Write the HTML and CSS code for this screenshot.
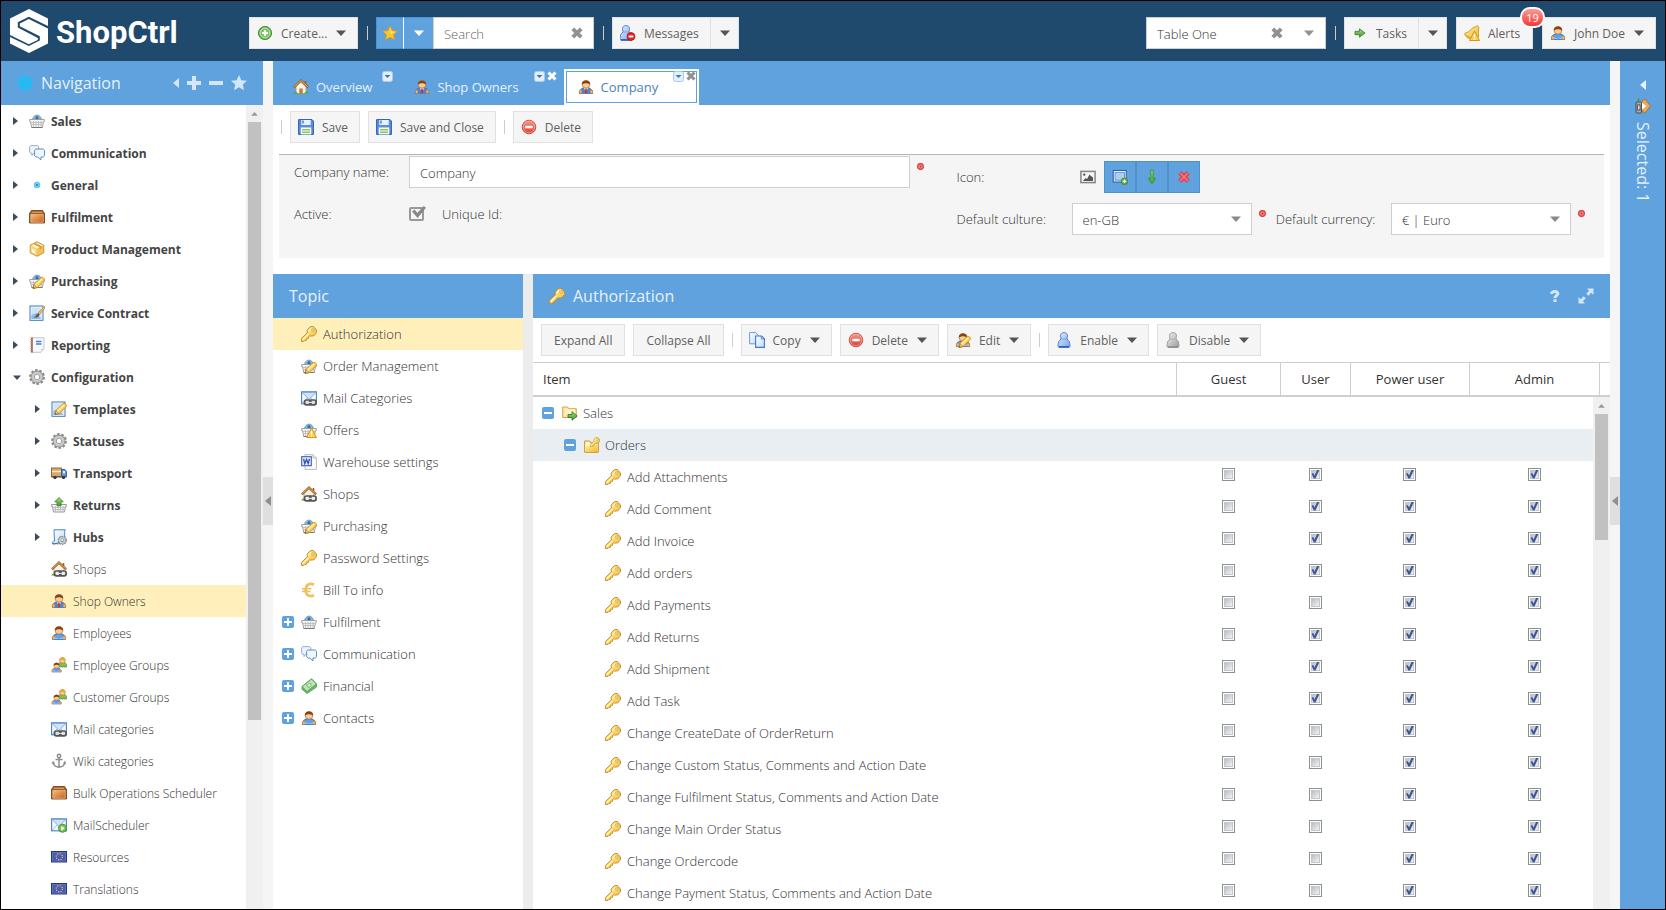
FILE: index.html
```html
<!DOCTYPE html>
<html lang="en">
<head>
<meta charset="utf-8">
<title>ShopCtrl</title>
<link rel="stylesheet" href="styles.css">
</head>
<body>
<svg class="sprite" aria-hidden="true">
  <defs>
    <linearGradient id="g-gold" x1="0" y1="0" x2="1" y2="1"><stop offset="0" stop-color="#fff3a8"/><stop offset="1" stop-color="#f2b62c"/></linearGradient>
    <linearGradient id="g-blue" x1="0" y1="0" x2="1" y2="1"><stop offset="0" stop-color="#e4efff"/><stop offset="1" stop-color="#7aa5ea"/></linearGradient>
    <linearGradient id="g-paper" x1="0" y1="0" x2="1" y2="1"><stop offset="0" stop-color="#fff"/><stop offset="1" stop-color="#bcdcf8"/></linearGradient>
    <linearGradient id="g-grey" x1="0" y1="0" x2="1" y2="1"><stop offset="0" stop-color="#f4f4f4"/><stop offset="1" stop-color="#999"/></linearGradient>
    <linearGradient id="g-box" x1="0" y1="0" x2="1" y2="1"><stop offset="0" stop-color="#f6bd7d"/><stop offset="1" stop-color="#cc6220"/></linearGradient>
    <linearGradient id="g-red" x1="0" y1="0" x2="0" y2="1"><stop offset="0" stop-color="#f79a8c"/><stop offset="1" stop-color="#d93a30"/></linearGradient>
    <linearGradient id="g-green" x1="0" y1="0" x2="0" y2="1"><stop offset="0" stop-color="#a7dd8b"/><stop offset="1" stop-color="#3f962f"/></linearGradient>
  </defs>
  <symbol id="i-pencil" viewBox="0 0 16 16"><path d="M4 15.500l.8-4 7.200-6.800c1.400-1.400 4.600 1.400 3 3l-7 7z" fill="#fcd45c" stroke="#c98a1e" stroke-width=".9"/><path d="M6.500 12l6.500-6" stroke="#fff0b0" stroke-width="1.200"/><path d="M4 15.500l.8-3.800 3 2.900z" fill="#f3d7b0" stroke="#a86c2c" stroke-width=".7"/><path d="M4 15.500l.5-1.800 1.300 1.300z" fill="#553"/></symbol>
  <symbol id="i-link" viewBox="0 0 16 16"><g fill="none" stroke="#555" stroke-width="1.700"><rect x="3.500" y="10" width="6.500" height="4.800" rx="2"/><rect x="8.600" y="10" width="6.500" height="4.800" rx="2"/></g><path d="M7 12.400h5" stroke="#e8e8e8" stroke-width="1.100"/></symbol>
  <symbol id="i-warn" viewBox="0 0 16 16"><path d="M10.500 6l5 9.500h-10z" fill="#fbcf4e" stroke="#d8941c" stroke-linejoin="round"/><path d="M10.500 9v3.500M10.500 13.500v1.200" stroke="#fff" stroke-width="1.400"/></symbol>
  <symbol id="i-basket" viewBox="0 0 16 16"><path d="M3.500 7c.5-6.500 8.500-6.500 9 0z" fill="#8bbbe0" stroke="#5f94c0" stroke-width=".9"/><path d="M6.500 6.500V4L8 3l1.500 1v2.500z" fill="#356f9f"/><path d="M.7 6.500h14.600v2h-.8l-1.200 6H2.700l-1.200-6H.7z" fill="#f4f4f4" stroke="#9a9a9a" stroke-width=".9"/><path d="M2 9.500h12M2.500 11.500h11M4.500 8v6M7 8v6M9.500 8v6M12 8v6" stroke="#b9b9b9" stroke-width=".8" fill="none"/><path d="M2.700 14.500h10.600" stroke="#777"/></symbol>
  <symbol id="i-basket-edit" viewBox="0 0 16 16"><use href="#i-basket"/><use href="#i-pencil"/></symbol>
  <symbol id="i-basket-warn" viewBox="0 0 16 16"><use href="#i-basket"/><use href="#i-warn"/></symbol>
  <symbol id="i-basket-up" viewBox="0 0 16 16"><path d="M.7 7.500h14.600v2h-.8l-1 5.500H2.500l-1-5.500H.7z" fill="#f4f4f4" stroke="#8f8f8f" stroke-width=".9"/><path d="M2 10.500h12M2.500 12.500h11M4.500 9v5.500M7 9v5.500M9.500 9v5.500M12 9v5.500" stroke="#b6b6b6" stroke-width=".8"/><path d="M8 .6l4.200 4.200h-2.200v4h-4v-4H3.800z" fill="url(#g-green)" stroke="#3b8b2b" stroke-width=".9"/></symbol>
  <symbol id="i-chat" viewBox="0 0 16 16"><path d="M2 .6h6.500l1.300 1.200v5.400l-1.300 1.200h-4L3 10.500V8.400H2L.6 7.200V1.800z" fill="#eef4fb" stroke="#8aa6cb" stroke-width=".9"/><path d="M6.800 4h7.400l1.300 1.200v5.600L14.200 12H12l-.2 3-3-3h-2l-1.200-1.200V5.200z" fill="#eef6fe" stroke="#4f82bd" stroke-width=".9"/></symbol>
  <symbol id="i-dot" viewBox="0 0 16 16"><circle cx="8" cy="8" r="2.600" fill="#8bdcf7" stroke="#6cc0ee" stroke-width="1.300"/><circle cx="8" cy="8" r="1.300" fill="#2196d8"/></symbol>
  <symbol id="i-box" viewBox="0 0 16 16"><path d="M2.500 1.500h11l2 3v9.500h-15V4.500z" fill="#8a4a12" stroke="#6b360b" stroke-width=".8"/><path d="M3 2.500h10l1 1.600H2z" fill="#d79a5c"/><rect x="1.800" y="5.200" width="12.400" height="8" fill="url(#g-box)" stroke="#f3c493" stroke-width=".7"/></symbol>
  <symbol id="i-cube" viewBox="0 0 16 16"><path d="M8 .7l6.800 3.500v7.600L8 15.300l-6.800-3.500V4.200z" fill="#f3c258" stroke="#c58f2b" stroke-width=".9"/><path d="M8 1.500l6 3-6 3.200-6-3.200z" fill="#fff2c8"/><path d="M1.800 5l5.800 3.200v6L1.800 11.400z" fill="#fbdc8a"/><path d="M4.500 2.900l6 3.200v2.500l2-1V5.200L6.500 2z" fill="#d39a38"/><path d="M3 8.500l3 1.600v2.500l-3-1.500z" fill="#fff"/></symbol>
  <symbol id="i-note" viewBox="0 0 16 16"><rect x="1" y="1" width="13" height="14.300" fill="#fff" stroke="#3b76bd"/><rect x="2.300" y="2.300" width="10.400" height="11.700" fill="#cfe4f8"/><path d="M2.300 14v-4l5-2 5 6z" fill="#8ebbe8"/></symbol>
  <symbol id="i-note-brush" viewBox="0 0 16 16"><use href="#i-note"/><path d="M15.500 1.500L9 8l1.500 1.500L16 3z" fill="#f0c46a" stroke="#b07a24" stroke-width=".7"/><path d="M9 8l1.600 1.500C10 12 8 12.800 4.800 12.600 7 11.500 7 9.500 9 8z" fill="#5a5a58"/></symbol>
  <symbol id="i-note-edit" viewBox="0 0 16 16"><use href="#i-note"/><use href="#i-pencil" y="-2"/></symbol>
  <symbol id="i-report" viewBox="0 0 16 16"><path d="M3 .8h12v11l-3 3.500H3z" fill="#f6f8fb" stroke="#b8bec8" stroke-width=".9"/><path d="M15 11.800h-3v3.500z" fill="#d3dae2"/><path d="M2.800.5v15" stroke="#9a4d32" stroke-width="1.800"/><path d="M1 2.200h2.500M1 4.500h2.500M1 6.800h2.500M1 9.100h2.500M1 11.400h2.500M1 13.700h2.500" stroke="#d9b9a8" stroke-width=".8"/><path d="M7 4.500h5.500M7 7h5.500" stroke="#4a7ed0" stroke-width="1.500"/></symbol>
  <symbol id="i-gear" viewBox="0 0 16 16"><circle cx="8" cy="8" r="6.600" fill="none" stroke="#8a8a8a" stroke-width="2.600" stroke-dasharray="2.500 1.647"/><circle cx="8" cy="8" r="4.300" fill="none" stroke="#8d8d8d" stroke-width="4.200"/><circle cx="8" cy="8" r="4.200" fill="none" stroke="#c9c9c9" stroke-width="2.800"/></symbol>
  <symbol id="i-truck" viewBox="0 0 16 16"><rect x=".5" y="3" width="10" height="8.500" fill="#d8a868" stroke="#8a5f2e" stroke-width=".9"/><path d="M1 6.500h9" stroke="#fff0d0" stroke-width="1.400"/><path d="M10.500 4.500h3.500l1.500 2v5h-5z" fill="#5b93dc" stroke="#2f5ea4" stroke-width=".9"/><path d="M12 6h2v2.500h-2z" fill="#e0efff"/><path d="M.5 12h15" stroke="#444" stroke-width="1"/><circle cx="4" cy="12.500" r="1.600" fill="#333"/><circle cx="12.500" cy="12.500" r="1.600" fill="#333"/></symbol>
  <symbol id="i-script-gear" viewBox="0 0 16 16"><path d="M3 .8h11.500c-1 .6-1 2-.8 3v8l-11 3.500c-2-.2-2-3 .8-3.200z" fill="url(#g-paper)" stroke="#3f78be" stroke-width=".9"/><path d="M1.500 14.500c2-.5 5 1 8 0" stroke="#3f78be" fill="none"/><g transform="translate(6.500 6.500) scale(.6)"><use href="#i-gear" width="16" height="16"/></g></symbol>
  <symbol id="i-house" viewBox="0 0 16 16"><path d="M3 7l5-4.500L13 7v7.500H3z" fill="#fbf3e2" stroke="#a89878" stroke-width=".8"/><path d="M12.500 2v4" stroke="#9c5a2a" stroke-width="1.600"/><path d="M.8 8.300L8 1.600l7.200 6.700" fill="none" stroke="#9c6228" stroke-width="2.300"/><path d="M1.200 7.800L8 1.600l6.800 6.200" fill="none" stroke="#e6b56c" stroke-width=".9"/><path d="M6.300 9.500h3.400v5.500H6.300z" fill="#b98046"/><path d="M.5 14.500c0-2.500 3.500-2.500 4.500 0zM11 14.500c1-2.500 4.500-2.500 4.500 0z" fill="#57a83f"/></symbol>
  <symbol id="i-house-link" viewBox="0 0 16 16"><use href="#i-house"/><path d="M4 10h11v5H4z" fill="#eee"/><use href="#i-link"/></symbol>
  <symbol id="i-user" viewBox="0 0 16 16"><path d="M1.500 14.500C1.500 10 4 8.800 8 8.800s6.500 1.200 6.500 5.700z" fill="#5da2ee" stroke="#2463b4" stroke-width=".9"/><ellipse cx="2.800" cy="12.800" rx="1.600" ry="1.900" fill="#f3b26c" stroke="#c07836" stroke-width=".6"/><ellipse cx="13.200" cy="12.800" rx="1.600" ry="1.900" fill="#f3b26c" stroke="#c07836" stroke-width=".6"/><path d="M4.500 12c2 2 5 2 7 0l.5 2.300H4z" fill="#8cc6fb"/><circle cx="8" cy="5.300" r="3.900" fill="#f9cb92" stroke="#b3703a" stroke-width=".7"/><path d="M3.800 5.500C3.400.2 12.600.2 12.200 5.500 10.500 4.600 9 4.200 8 4.200s-2.500.4-4.200 1.300z" fill="#85421b"/></symbol>
  <symbol id="i-suit" viewBox="0 0 16 16"><use href="#i-user"/><path d="M4 10l4-1 4 1 .5 4.800h-9z" fill="#5783b8"/><path d="M6 9.200h4L8 13z" fill="#f4f8ff"/><path d="M7.300 9.500h1.400l.4 4L8 14.600l-1.100-1.100z" fill="#cf2f36"/></symbol>
  <symbol id="i-users" viewBox="0 0 16 16"><g transform="translate(6.300 0) scale(.64)"><path d="M0 15.500C0 9 4 8.800 8 8.800s7.500.2 7 6.700z" fill="#7dc44d" stroke="#3f8426"/><circle cx="8" cy="5.300" r="4.400" fill="#f9cb92" stroke="#b3703a"/><path d="M3 6C2.500-.8 13.500-.8 13 6 11 4 5 4 3 6z" fill="#eda822"/></g><g transform="translate(0 4.800) scale(.7)"><use href="#i-user" width="16" height="16"/></g></symbol>
  <symbol id="i-user-edit" viewBox="0 0 16 16"><use href="#i-user"/><use href="#i-pencil"/></symbol>
  <symbol id="i-mail" viewBox="0 0 16 16"><rect x=".6" y="1.800" width="14.800" height="12" fill="#f4f9ff" stroke="#4a7fc1" stroke-width="1.100"/><path d="M1.500 13l5-5.500M14.500 13l-5-5.500" stroke="#9fc0e8" fill="none"/><path d="M1.200 2.500L8 9.500l6.800-7z" fill="#cfe2f8" stroke="#7ba7dc" stroke-width=".9"/></symbol>
  <symbol id="i-mail-link" viewBox="0 0 16 16"><use href="#i-mail"/><path d="M4 10.500h11v4H4z" fill="#ddd"/><use href="#i-link"/></symbol>
  <symbol id="i-mail-go" viewBox="0 0 16 16"><use href="#i-mail"/><circle cx="11.500" cy="11.300" r="4" fill="#79c257" stroke="#3e8f2e" stroke-width=".9"/><path d="M10.300 8.900l3.200 2.400-3.200 2.400z" fill="#fff"/></symbol>
  <symbol id="i-anchor" viewBox="0 0 16 16"><g fill="none" stroke="#8d8d8d" stroke-width="1.500"><circle cx="8" cy="3" r="1.700"/><path d="M8 4.700v9.300M4.500 6.500h7M2 9c.3 3.500 2.700 5 6 5.200 3.300-.2 5.700-1.700 6-5.200"/></g><path d="M.8 10.800L2 7.800l2.200 2.600zM15.200 10.800L14 7.800l-2.200 2.600z" fill="#8d8d8d"/></symbol>
  <symbol id="i-flag" viewBox="0 0 16 16"><rect x=".5" y="2.500" width="15" height="10.500" fill="#4a5bb0" stroke="#29366f"/><rect x="1.500" y="3.500" width="13" height="8.500" fill="none" stroke="#7180cc" stroke-width=".6"/><circle cx="8.300" cy="7.800" r="3.100" fill="none" stroke="#f4df6a" stroke-width="1.100" stroke-dasharray="1.100 1.330"/></symbol>
  <symbol id="i-key" viewBox="0 0 16 16"><path d="M9.300.7l2.700-.3 3.300 3.200.3 2.900-2.800 3.300-3.400.3-.9-.2-.9.900-.3 1.700-1.700.3-.4 1.600-1.600.3-.9.900H.6v-3.200l5.700-5.500-.1-2.700z" fill="url(#g-gold)" stroke="#c98c22" stroke-width="1" stroke-linejoin="round"/><circle cx="12" cy="4" r="1.200" fill="#fff" stroke="#c98c22" stroke-width=".7"/><path d="M1.600 13.600l5.900-5.700M7.500 6l2.200-3.500" stroke="#fffbd8" stroke-width="1.100" fill="none"/></symbol>
  <symbol id="i-word" viewBox="0 0 16 16"><path d="M4 .6h8l3.400 3.400v11.400H4z" fill="#fbfbfb" stroke="#b4b4b4" stroke-width=".9"/><path d="M12 .6v3.400h3.400" fill="#ddd" stroke="#b4b4b4" stroke-width=".7"/><rect x=".7" y="2.700" width="9.600" height="9" fill="#e5ecfb" stroke="#3d5cb8" stroke-width="1.100"/><path d="M2.600 4.800l1.200 4.800 1.700-4 1.700 4 1.200-4.800" fill="none" stroke="#3355bb" stroke-width="1.400"/></symbol>
  <symbol id="i-euro" viewBox="0 0 16 16"><path d="M13 2.800C9 .6 4.800 2.400 4.600 8c.2 5.600 4.400 7.400 8.400 5.200" fill="none" stroke="#e8c564" stroke-width="2.800"/><path d="M1 6.700h9.500M1 9.400h8.500" stroke="#e8c564" stroke-width="1.600"/></symbol>
  <symbol id="i-money" viewBox="0 0 16 16"><path d="M1 8.500L10.500.8 15.500 6l.1 3L6 15.500l-5-4.300z" fill="#6fb56d" stroke="#4f9e52" stroke-width=".8"/><path d="M1.200 8.500L10.500 1l4.800 5-9.300 7.500z" fill="#bde5b6" stroke="#55a55b" stroke-width=".9"/><ellipse cx="8.200" cy="7.300" rx="2.300" ry="1.600" fill="#e0f4da" stroke="#6ab36c" stroke-width=".8" transform="rotate(-40 8.200 7.300)"/><path d="M4.500 6l5 5.200" stroke="#7fbf7c" stroke-width=".7"/></symbol>
  <symbol id="i-folder" viewBox="0 0 16 16"><path d="M.7 2h5l1 1.700h7.600V12.500H.7z" fill="#fbe7a6" stroke="#d69d35" stroke-width=".9"/><path d="M3 5h10M3 7h10M3 9h7" stroke="#fffbe8" stroke-width="1"/></symbol>
  <symbol id="i-folder-go" viewBox="0 0 16 16"><use href="#i-folder"/><path d="M6 9.500h4V6.700l5.200 4.300-5.200 4.300v-2.800H6z" fill="url(#g-green)" stroke="#35792a" stroke-width=".9"/></symbol>
  <symbol id="i-folder-key" viewBox="0 0 16 16"><path d="M.7 4h5l1 1.700h7.600V15.300H.7z" fill="#fff6d0" stroke="#d08c20" stroke-width="1"/><path d="M1.300 15V9h5l1-1.300h6.500V15z" fill="url(#g-gold)"/><g transform="translate(5.800 0) scale(.64)"><use href="#i-key" width="16" height="16"/></g></symbol>
  <symbol id="i-copy" viewBox="0 0 16 16"><path d="M.6.600h6l2.700 2.700v8.500H.6z" fill="url(#g-paper)" stroke="#6f9bd8"/><path d="M6.600 4h6l2.800 2.700v8.700H6.600z" fill="url(#g-paper)" stroke="#4577c4" stroke-width="1.100"/><path d="M12.300 4v3h3" fill="none" stroke="#4577c4" stroke-width=".8"/></symbol>
  <symbol id="i-delete" viewBox="0 0 16 16"><circle cx="8" cy="8" r="6.800" fill="url(#g-red)" stroke="#c94a40" stroke-width=".9"/><circle cx="8" cy="8" r="5.700" fill="none" stroke="#f7b3a8" stroke-width=".7"/><rect x="4.300" y="6.800" width="7.400" height="2.500" fill="#fff"/></symbol>
  <symbol id="i-add" viewBox="0 0 16 16"><circle cx="8" cy="8" r="6.600" fill="#57a943" stroke="#3f8d35" stroke-width=".9"/><circle cx="8" cy="8" r="5" fill="#7cc45f" stroke="#cfeac4" stroke-width="1"/><path d="M8 5v6M5 8h6" stroke="#fff" stroke-width="2.200"/></symbol>
  <symbol id="i-star" viewBox="0 0 16 16"><path d="M8 .8l2.200 4.800 5.200.6-3.800 3.500 1 5.200L8 12.300l-4.600 2.600 1-5.200L.6 6.200l5.200-.6z" fill="#fbc72e" stroke="#d9951b" stroke-width=".8" stroke-linejoin="round"/><path d="M8 2.500L9.500 6.500l4 .6-4.500 2z" fill="#ffe685"/></symbol>
  <symbol id="i-pawn" viewBox="0 0 16 16"><path d="M5 7L4.500 3.300C4.500-.3 11.500-.3 11.500 3.300L11 7l2.300 2.500.8 4.500-1 1.500H2.900L1.900 14l.8-4.500z" fill="url(#g-blue)" stroke="#4d7bc9" stroke-width=".9"/><path d="M2.600 14h10.800l-.7 1.400H3.300z" fill="#3263c4"/><path d="M5 7h6" stroke="#6b95dc" stroke-width=".8"/></symbol>
  <symbol id="i-pawn-grey" viewBox="0 0 16 16"><path d="M5 7L4.500 3.300C4.500-.3 11.500-.3 11.500 3.300L11 7l2.300 2.500.8 4.500-1 1.500H2.900L1.900 14l.8-4.500z" fill="url(#g-grey)" stroke="#999" stroke-width=".9"/><path d="M2.600 14.300h10.800l-.7 1.100H3.300z" fill="#888"/><path d="M5 7h6" stroke="#aaa" stroke-width=".8"/></symbol>
  <symbol id="i-pawn-del" viewBox="0 0 16 16"><use href="#i-pawn" x="-2"/><circle cx="11" cy="11.500" r="3.900" fill="#e22b24" stroke="#b90f0f" stroke-width=".9"/><rect x="8.600" y="10.600" width="4.800" height="1.800" fill="#fff"/></symbol>
  <symbol id="i-go" viewBox="0 0 16 16"><path d="M3 6.300h4.500V3.800L13 8l-5.500 4.200V9.700H3z" fill="url(#g-green)" stroke="#3a8a2c" stroke-width=".9"/></symbol>
  <symbol id="i-bell" viewBox="0 0 16 16"><path d="M13.500.6l1.300 1.600c-.8 4.500 0 7-.2 9.300L12 14.800 1 10.200.8 8.300C6 7.800 7 2.300 11.800 1.700z" fill="url(#g-gold)" stroke="#cf9320" stroke-width=".9"/><path d="M2 10.500c1 3 3 3.500 5 2.300" fill="#eab83e" stroke="#c58a1c" stroke-width=".8"/><use href="#i-warn"/></symbol>
  <symbol id="i-save" viewBox="0 0 16 16"><path d="M.6.600h13.400l1.400 1.400v13.400H.6z" fill="#5a8fdc" stroke="#2f5cae" stroke-width="1"/><rect x="3.300" y="1" width="9.400" height="5" fill="#e9f1fd"/><path d="M5 1.500v3" stroke="#4377cf" stroke-width="1.400"/><rect x="2.800" y="8.500" width="10.400" height="6.900" fill="#fff"/><path d="M4 10.700h8M4 13.200h8" stroke="#86c85e" stroke-width="1.400"/></symbol>
  <symbol id="i-picture" viewBox="0 0 16 16"><rect x=".9" y="2.400" width="14.200" height="11.200" fill="#f4f4f4" stroke="#868686" stroke-width="1.500"/><path d="M3 12l2.500-3 1.500 1 2.500-4.500 1.500 1.500 2 1.500V12z" fill="#555"/><circle cx="4.200" cy="5.600" r="1.200" fill="#555"/></symbol>
  <symbol id="i-image-add" viewBox="0 0 16 16"><rect x="1.200" y="1.500" width="13" height="11.500" fill="#fff" stroke="#315fa8" stroke-width="1.100"/><rect x="3" y="3.300" width="9.400" height="7.900" fill="#a9d0ef" stroke="#4f88c4" stroke-width=".8"/><circle cx="12.500" cy="12.300" r="3.300" fill="#5eb044" stroke="#35812a" stroke-width=".7"/><path d="M12.500 10.500v3.600M10.700 12.300h3.600" stroke="#fff" stroke-width="1.300"/></symbol>
  <symbol id="i-down" viewBox="0 0 16 16"><path d="M6.800 1.200h2.400v8.500l2.600-.2L8 14.800 4.200 9.500l2.600.2z" fill="url(#g-green)" stroke="#3b9430" stroke-width=".9"/></symbol>
  <symbol id="i-cross" viewBox="0 0 16 16"><path d="M3.800 3.800l8.400 8.400M12.200 3.800l-8.400 8.400" stroke="#e2343c" stroke-width="4.200"/><path d="M4 4l8 8M12 4l-8 8" stroke="#f4717a" stroke-width="1.800"/></symbol>
  <symbol id="i-caret" viewBox="0 0 10 6"><path d="M0 .5h10L5 6z" fill="currentColor"/></symbol>
  <symbol id="i-caret-left" viewBox="0 0 6 10"><path d="M6 0v10L0 5z" fill="currentColor"/></symbol>
  <symbol id="i-caret-right" viewBox="0 0 5 8"><path d="M0 0v8l5-4z" fill="currentColor"/></symbol>
  <symbol id="i-x" viewBox="0 0 12 12"><path d="M1.800 1.800l8.400 8.400M10.200 1.800l-8.400 8.400" stroke="currentColor" stroke-width="3.800"/></symbol>
  <symbol id="i-plus" viewBox="0 0 14 14"><path d="M7 0v14M0 7h14" stroke="currentColor" stroke-width="4"/></symbol>
  <symbol id="i-minus" viewBox="0 0 14 14"><path d="M0 7h14" stroke="currentColor" stroke-width="4"/></symbol>
  <symbol id="i-solid-star" viewBox="0 0 16 16"><path d="M8 0l2.300 5.200 5.700.6-4.200 3.800 1.200 5.700L8 12.300l-5 3 1.200-5.700L0 5.800l5.700-.6z" fill="currentColor"/></symbol>
  <symbol id="i-expand" viewBox="0 0 16 16"><path d="M9 .5h6.500V7l-2.200-2.200-3 3-2.100-2.100 3-3zM7 15.500H.5V9l2.200 2.200 3-3 2.100 2.100-3 3z" fill="currentColor"/></symbol>
  <symbol id="i-help" viewBox="0 0 10 14"><path d="M1.600 5C1.400 1.700 8 1.700 7.800 4.600 7.700 6.600 5 6.600 5 9" fill="none" stroke="currentColor" stroke-width="3"/><path d="M3.400 10.300h3.200V13H3.400z" fill="currentColor"/></symbol>
  <symbol id="i-mini" viewBox="0 0 11 11"><rect x=".5" y=".5" width="10" height="10" rx="2" fill="#e3effc" stroke="#a9cbef"/><path d="M2.500 4h6l-3 3z" fill="#3f78b5"/></symbol>
  <symbol id="i-close-box" viewBox="0 0 12 12"><rect width="12" height="12" rx="2" fill="#5fa2dd"/><path d="M2 6h8" stroke="#fff" stroke-width="2"/></symbol>
  <symbol id="i-open-box" viewBox="0 0 12 12"><rect width="12" height="12" rx="2" fill="#5fa2dd"/><path d="M2 6h8M6 2v8" stroke="#fff" stroke-width="2"/></symbol>
  <symbol id="i-required" viewBox="0 0 7 7"><circle cx="3.500" cy="3.500" r="2.900" fill="#f48a8a" stroke="#da3838" stroke-width="1.100"/><circle cx="3.500" cy="3.500" r="1" fill="#d33"/></symbol>
  <symbol id="i-scan" viewBox="0 0 16 16"><path d="M7 3l3-2 5.500 7-5.500 7-3-2z" fill="#e7a75c" stroke="#a96b2a" stroke-width=".8"/><path d="M6 4l5.500 4L6 12.500z" fill="#fff"/><rect x="1" y="4" width="5.500" height="11" rx="1" fill="#a9a9a9" stroke="#444" stroke-width=".9"/><rect x="2.700" y="7" width="2.300" height="5" fill="#f2f2f2" stroke="#333" stroke-width=".8"/><path d="M3.500 4V.500" stroke="#3a9a38" stroke-width="1.500"/></symbol>
  <symbol id="i-logo" viewBox="0 0 38 44"><path d="M19 0l19 9.500V17L18.800 7.700 7.800 13.200v5.400L27.800 29v2L18.800 35.200 0 26V9.500z" fill="currentColor"/><path d="M19 44L0 34.500V28l18.800 9 11-5.500v-4.300L9.800 17.200v-2.600L18.800 10 38 19.500v15z" fill="currentColor"/></symbol>
</svg>

<div class="app">
  <header class="topbar">
    <a class="logo" href="#"><svg><use href="#i-logo"/></svg><span>ShopCtrl</span></a>
    <button class="btn create"><svg class="ico"><use href="#i-add"/></svg><span>Create...</span><svg class="caret"><use href="#i-caret"/></svg></button>
    <i class="sep"></i>
    <div class="group search">
      <button class="fav" aria-label="Favourites"><svg class="ico"><use href="#i-star"/></svg></button>
      <button class="fav drop" aria-label="Favourites menu"><svg class="caret"><use href="#i-caret"/></svg></button>
      <div class="field"><input type="text" placeholder="Search" aria-label="Search"><button class="clear" aria-label="Clear search"><svg><use href="#i-x"/></svg></button></div>
    </div>
    <i class="sep"></i>
    <div class="group">
      <button class="btn msg"><svg class="ico"><use href="#i-pawn-del"/></svg><span>Messages</span></button>
      <button class="btn split" aria-label="Messages menu"><svg class="caret"><use href="#i-caret"/></svg></button>
    </div>
    <div class="right">
      <div class="field combo"><input type="text" value="Table One" aria-label="Table"><button class="clear" aria-label="Clear table"><svg><use href="#i-x"/></svg></button><button class="clear" aria-label="Choose table"><svg class="caret"><use href="#i-caret"/></svg></button></div>
      <i class="sep"></i>
      <div class="group">
        <button class="btn tasks"><svg class="ico"><use href="#i-go"/></svg><span>Tasks</span></button>
        <button class="btn split" aria-label="Tasks menu"><svg class="caret"><use href="#i-caret"/></svg></button>
      </div>
      <button class="btn alerts"><svg class="ico"><use href="#i-bell"/></svg><span>Alerts</span><b class="badge">19</b></button>
      <button class="btn account"><svg class="ico"><use href="#i-user"/></svg><span>John Doe</span><svg class="caret"><use href="#i-caret"/></svg></button>
    </div>
  </header>

  <div class="body">
    <aside class="nav">
      <div class="bar navbar">
        <svg class="brand"><use href="#i-logo"/></svg><h2>Navigation</h2>
        <div class="tools">
          <button aria-label="Collapse panel"><svg class="arrow-left"><use href="#i-caret-left"/></svg></button>
          <button aria-label="Expand all"><svg class="t14"><use href="#i-plus"/></svg></button>
          <button aria-label="Collapse all"><svg class="t14"><use href="#i-minus"/></svg></button>
          <button aria-label="Favourites"><svg class="t16"><use href="#i-solid-star"/></svg></button>
        </div>
      </div>
      <div class="navscroll">
        <ul class="tree">
          <li class="l1"><svg class="tri"><use href="#i-caret-right"/></svg><svg class="ico"><use href="#i-basket"/></svg><span>Sales</span></li>
          <li class="l1"><svg class="tri"><use href="#i-caret-right"/></svg><svg class="ico"><use href="#i-chat"/></svg><span>Communication</span></li>
          <li class="l1"><svg class="tri"><use href="#i-caret-right"/></svg><svg class="ico"><use href="#i-dot"/></svg><span>General</span></li>
          <li class="l1"><svg class="tri"><use href="#i-caret-right"/></svg><svg class="ico"><use href="#i-box"/></svg><span>Fulfilment</span></li>
          <li class="l1"><svg class="tri"><use href="#i-caret-right"/></svg><svg class="ico"><use href="#i-cube"/></svg><span>Product Management</span></li>
          <li class="l1"><svg class="tri"><use href="#i-caret-right"/></svg><svg class="ico"><use href="#i-basket-edit"/></svg><span>Purchasing</span></li>
          <li class="l1"><svg class="tri"><use href="#i-caret-right"/></svg><svg class="ico"><use href="#i-note-brush"/></svg><span>Service Contract</span></li>
          <li class="l1"><svg class="tri"><use href="#i-caret-right"/></svg><svg class="ico"><use href="#i-report"/></svg><span>Reporting</span></li>
          <li class="l1"><svg class="tri open"><use href="#i-caret"/></svg><svg class="ico"><use href="#i-gear"/></svg><span>Configuration</span></li>
          <li class="l2"><svg class="tri"><use href="#i-caret-right"/></svg><svg class="ico"><use href="#i-note-edit"/></svg><span>Templates</span></li>
          <li class="l2"><svg class="tri"><use href="#i-caret-right"/></svg><svg class="ico"><use href="#i-gear"/></svg><span>Statuses</span></li>
          <li class="l2"><svg class="tri"><use href="#i-caret-right"/></svg><svg class="ico"><use href="#i-truck"/></svg><span>Transport</span></li>
          <li class="l2"><svg class="tri"><use href="#i-caret-right"/></svg><svg class="ico"><use href="#i-basket-up"/></svg><span>Returns</span></li>
          <li class="l2"><svg class="tri"><use href="#i-caret-right"/></svg><svg class="ico"><use href="#i-script-gear"/></svg><span>Hubs</span></li>
          <li class="leaf"><svg class="ico"><use href="#i-house-link"/></svg><a href="#">Shops</a></li>
          <li class="leaf selected"><svg class="ico"><use href="#i-suit"/></svg><a href="#">Shop Owners</a></li>
          <li class="leaf"><svg class="ico"><use href="#i-user"/></svg><a href="#">Employees</a></li>
          <li class="leaf"><svg class="ico"><use href="#i-users"/></svg><a href="#">Employee Groups</a></li>
          <li class="leaf"><svg class="ico"><use href="#i-users"/></svg><a href="#">Customer Groups</a></li>
          <li class="leaf"><svg class="ico"><use href="#i-mail-link"/></svg><a href="#">Mail categories</a></li>
          <li class="leaf"><svg class="ico"><use href="#i-anchor"/></svg><a href="#">Wiki categories</a></li>
          <li class="leaf"><svg class="ico"><use href="#i-box"/></svg><a href="#">Bulk Operations Scheduler</a></li>
          <li class="leaf"><svg class="ico"><use href="#i-mail-go"/></svg><a href="#">MailScheduler</a></li>
          <li class="leaf"><svg class="ico"><use href="#i-flag"/></svg><a href="#">Resources</a></li>
          <li class="leaf"><svg class="ico"><use href="#i-flag"/></svg><a href="#">Translations</a></li>
        </ul>
        <div class="scroll"><svg><use href="#i-caret"/></svg><i class="thumb long"></i></div>
      </div>
    </aside>
    <div class="splitter"><button aria-label="Toggle navigation"><svg><use href="#i-caret-left"/></svg></button></div>

    <main class="main">
      <div class="bar tabs">
        <div class="tab single"><svg class="ico"><use href="#i-house"/></svg><a href="#">Overview</a><span class="marks"><svg class="mini"><use href="#i-mini"/></svg></span></div>
        <div class="tab"><svg class="ico"><use href="#i-suit"/></svg><a href="#">Shop Owners</a><span class="marks"><svg class="mini"><use href="#i-mini"/></svg><svg class="shut"><use href="#i-x"/></svg></span></div>
        <div class="tab active"><svg class="ico"><use href="#i-suit"/></svg><a href="#">Company</a><span class="marks"><svg class="mini"><use href="#i-mini"/></svg><svg class="shut"><use href="#i-x"/></svg></span></div>
      </div>
      <div class="toolbar actions">
        <i class="sep"></i>
        <button class="btn"><svg class="ico"><use href="#i-save"/></svg><span>Save</span></button>
        <button class="btn"><svg class="ico"><use href="#i-save"/></svg><span>Save and Close</span></button>
        <i class="sep"></i>
        <button class="btn"><svg class="ico"><use href="#i-delete"/></svg><span>Delete</span></button>
      </div>
      <form class="form">
        <div class="col">
          <div class="line"><label for="name">Company name:</label><input class="text" id="name" type="text" value="Company"><svg class="req"><use href="#i-required"/></svg></div>
          <div class="line"><label for="active">Active:</label><input class="tick" id="active" type="checkbox" checked><span class="uid">Unique Id:</span></div>
        </div>
        <div class="col second">
          <div class="line"><span class="lbl">Icon:</span><svg class="ico pic"><use href="#i-picture"/></svg>
            <div class="iconbtns"><button type="button" aria-label="Add image"><svg class="ico"><use href="#i-image-add"/></svg></button><button type="button" aria-label="Download image"><svg class="ico"><use href="#i-down"/></svg></button><button type="button" aria-label="Remove image"><svg class="ico"><use href="#i-cross"/></svg></button></div></div>
          <div class="line"><label for="culture">Default culture:</label><div class="pick"><select id="culture"><option>en-GB</option></select><svg class="caret"><use href="#i-caret"/></svg></div><svg class="req"><use href="#i-required"/></svg>
            <label for="currency">Default currency:</label><div class="pick"><select id="currency"><option>€ | Euro</option></select><svg class="caret"><use href="#i-caret"/></svg></div><svg class="req"><use href="#i-required"/></svg></div>
        </div>
      </form>

      <div class="lower">
        <section class="topic">
          <div class="bar"><h2>Topic</h2></div>
          <ul class="topics">
            <li class="selected"><i class="box"></i><svg class="ico"><use href="#i-key"/></svg><a href="#">Authorization</a></li>
            <li><i class="box"></i><svg class="ico"><use href="#i-basket-edit"/></svg><a href="#">Order Management</a></li>
            <li><i class="box"></i><svg class="ico"><use href="#i-mail-link"/></svg><a href="#">Mail Categories</a></li>
            <li><i class="box"></i><svg class="ico"><use href="#i-basket-warn"/></svg><a href="#">Offers</a></li>
            <li><i class="box"></i><svg class="ico"><use href="#i-word"/></svg><a href="#">Warehouse settings</a></li>
            <li><i class="box"></i><svg class="ico"><use href="#i-house-link"/></svg><a href="#">Shops</a></li>
            <li><i class="box"></i><svg class="ico"><use href="#i-basket-edit"/></svg><a href="#">Purchasing</a></li>
            <li><i class="box"></i><svg class="ico"><use href="#i-key"/></svg><a href="#">Password Settings</a></li>
            <li><i class="box"></i><svg class="ico"><use href="#i-euro"/></svg><a href="#">Bill To info</a></li>
            <li><svg class="box"><use href="#i-open-box"/></svg><svg class="ico"><use href="#i-basket"/></svg><a href="#">Fulfilment</a></li>
            <li><svg class="box"><use href="#i-open-box"/></svg><svg class="ico"><use href="#i-chat"/></svg><a href="#">Communication</a></li>
            <li><svg class="box"><use href="#i-open-box"/></svg><svg class="ico"><use href="#i-money"/></svg><a href="#">Financial</a></li>
            <li><svg class="box"><use href="#i-open-box"/></svg><svg class="ico"><use href="#i-user"/></svg><a href="#">Contacts</a></li>
          </ul>
        </section>
        <div class="divider"></div>
        <section class="auth">
          <div class="bar"><svg class="ico"><use href="#i-key"/></svg><h2>Authorization</h2>
            <div class="tools wide"><button aria-label="Help"><svg class="help"><use href="#i-help"/></svg></button><button aria-label="Maximise"><svg class="t16"><use href="#i-expand"/></svg></button></div></div>
          <div class="toolbar">
            <button class="btn plain">Expand All</button>
            <button class="btn plain">Collapse All</button>
            <i class="sep"></i>
            <button class="btn"><svg class="ico"><use href="#i-copy"/></svg><span>Copy</span><svg class="caret"><use href="#i-caret"/></svg></button>
            <button class="btn"><svg class="ico"><use href="#i-delete"/></svg><span>Delete</span><svg class="caret"><use href="#i-caret"/></svg></button>
            <button class="btn"><svg class="ico"><use href="#i-user-edit"/></svg><span>Edit</span><svg class="caret"><use href="#i-caret"/></svg></button>
            <i class="sep"></i>
            <button class="btn"><svg class="ico"><use href="#i-pawn"/></svg><span>Enable</span><svg class="caret"><use href="#i-caret"/></svg></button>
            <button class="btn"><svg class="ico"><use href="#i-pawn-grey"/></svg><span>Disable</span><svg class="caret"><use href="#i-caret"/></svg></button>
          </div>
          <div class="gridwrap">
            <table class="grid">
              <colgroup><col><col class="c-guest"><col class="c-user"><col class="c-power"><col class="c-admin"><col class="c-end"></colgroup>
              <thead><tr><th>Item</th><th>Guest</th><th>User</th><th>Power user</th><th>Admin</th><th></th></tr></thead>
              <tbody>
                <tr><td><div class="cell d0"><svg class="box"><use href="#i-close-box"/></svg><svg class="ico"><use href="#i-folder-go"/></svg><span>Sales</span></div></td><td></td><td></td><td></td><td></td><td></td></tr>
                <tr class="shade"><td><div class="cell d1"><svg class="box"><use href="#i-close-box"/></svg><svg class="ico"><use href="#i-folder-key"/></svg><span>Orders</span></div></td><td></td><td></td><td></td><td></td><td></td></tr>
                <tr><td><div class="cell d2"><svg class="ico"><use href="#i-key"/></svg><span>Add Attachments</span></div></td><td><input type="checkbox" aria-label="Guest"></td><td><input type="checkbox" aria-label="User" checked></td><td><input type="checkbox" aria-label="Power user" checked></td><td><input type="checkbox" aria-label="Admin" checked></td><td></td></tr>
                <tr><td><div class="cell d2"><svg class="ico"><use href="#i-key"/></svg><span>Add Comment</span></div></td><td><input type="checkbox" aria-label="Guest"></td><td><input type="checkbox" aria-label="User" checked></td><td><input type="checkbox" aria-label="Power user" checked></td><td><input type="checkbox" aria-label="Admin" checked></td><td></td></tr>
                <tr><td><div class="cell d2"><svg class="ico"><use href="#i-key"/></svg><span>Add Invoice</span></div></td><td><input type="checkbox" aria-label="Guest"></td><td><input type="checkbox" aria-label="User" checked></td><td><input type="checkbox" aria-label="Power user" checked></td><td><input type="checkbox" aria-label="Admin" checked></td><td></td></tr>
                <tr><td><div class="cell d2"><svg class="ico"><use href="#i-key"/></svg><span>Add orders</span></div></td><td><input type="checkbox" aria-label="Guest"></td><td><input type="checkbox" aria-label="User" checked></td><td><input type="checkbox" aria-label="Power user" checked></td><td><input type="checkbox" aria-label="Admin" checked></td><td></td></tr>
                <tr><td><div class="cell d2"><svg class="ico"><use href="#i-key"/></svg><span>Add Payments</span></div></td><td><input type="checkbox" aria-label="Guest"></td><td><input type="checkbox" aria-label="User"></td><td><input type="checkbox" aria-label="Power user" checked></td><td><input type="checkbox" aria-label="Admin" checked></td><td></td></tr>
                <tr><td><div class="cell d2"><svg class="ico"><use href="#i-key"/></svg><span>Add Returns</span></div></td><td><input type="checkbox" aria-label="Guest"></td><td><input type="checkbox" aria-label="User" checked></td><td><input type="checkbox" aria-label="Power user" checked></td><td><input type="checkbox" aria-label="Admin" checked></td><td></td></tr>
                <tr><td><div class="cell d2"><svg class="ico"><use href="#i-key"/></svg><span>Add Shipment</span></div></td><td><input type="checkbox" aria-label="Guest"></td><td><input type="checkbox" aria-label="User" checked></td><td><input type="checkbox" aria-label="Power user" checked></td><td><input type="checkbox" aria-label="Admin" checked></td><td></td></tr>
                <tr><td><div class="cell d2"><svg class="ico"><use href="#i-key"/></svg><span>Add Task</span></div></td><td><input type="checkbox" aria-label="Guest"></td><td><input type="checkbox" aria-label="User" checked></td><td><input type="checkbox" aria-label="Power user" checked></td><td><input type="checkbox" aria-label="Admin" checked></td><td></td></tr>
                <tr><td><div class="cell d2"><svg class="ico"><use href="#i-key"/></svg><span>Change CreateDate of OrderReturn</span></div></td><td><input type="checkbox" aria-label="Guest"></td><td><input type="checkbox" aria-label="User"></td><td><input type="checkbox" aria-label="Power user" checked></td><td><input type="checkbox" aria-label="Admin" checked></td><td></td></tr>
                <tr><td><div class="cell d2"><svg class="ico"><use href="#i-key"/></svg><span>Change Custom Status, Comments and Action Date</span></div></td><td><input type="checkbox" aria-label="Guest"></td><td><input type="checkbox" aria-label="User"></td><td><input type="checkbox" aria-label="Power user" checked></td><td><input type="checkbox" aria-label="Admin" checked></td><td></td></tr>
                <tr><td><div class="cell d2"><svg class="ico"><use href="#i-key"/></svg><span>Change Fulfilment Status, Comments and Action Date</span></div></td><td><input type="checkbox" aria-label="Guest"></td><td><input type="checkbox" aria-label="User"></td><td><input type="checkbox" aria-label="Power user" checked></td><td><input type="checkbox" aria-label="Admin" checked></td><td></td></tr>
                <tr><td><div class="cell d2"><svg class="ico"><use href="#i-key"/></svg><span>Change Main Order Status</span></div></td><td><input type="checkbox" aria-label="Guest"></td><td><input type="checkbox" aria-label="User"></td><td><input type="checkbox" aria-label="Power user" checked></td><td><input type="checkbox" aria-label="Admin" checked></td><td></td></tr>
                <tr><td><div class="cell d2"><svg class="ico"><use href="#i-key"/></svg><span>Change Ordercode</span></div></td><td><input type="checkbox" aria-label="Guest"></td><td><input type="checkbox" aria-label="User"></td><td><input type="checkbox" aria-label="Power user" checked></td><td><input type="checkbox" aria-label="Admin" checked></td><td></td></tr>
                <tr><td><div class="cell d2"><svg class="ico"><use href="#i-key"/></svg><span>Change Payment Status, Comments and Action Date</span></div></td><td><input type="checkbox" aria-label="Guest"></td><td><input type="checkbox" aria-label="User"></td><td><input type="checkbox" aria-label="Power user" checked></td><td><input type="checkbox" aria-label="Admin" checked></td><td></td></tr>
              </tbody>
            </table>
            <div class="scroll over"><svg><use href="#i-caret"/></svg><i class="thumb short"></i></div>
          </div>
        </section>
      </div>
    </main>

    <div class="splitter"><button aria-label="Toggle selection"><svg><use href="#i-caret-left"/></svg></button></div>
    <aside class="selection">
      <button aria-label="Open selection"><svg class="arrow-left"><use href="#i-caret-left"/></svg></button>
      <svg class="ico"><use href="#i-scan"/></svg>
      <span>Selected: 1</span>
    </aside>
  </div>
</div>
</body>
</html>
```
FILE: styles.css
```css
* { box-sizing: border-box; }
body {
  margin: 0;
  font-family: "Open Sans", "Noto Sans", sans-serif;
  font-size: 13px;
  color: #333;
}
button, input, select { font: inherit; color: inherit; margin: 0; }
button { padding: 0; border: 0; background: none; cursor: pointer; }
a { color: inherit; text-decoration: none; }
ul { list-style: none; margin: 0; padding: 0; }
h2 { margin: 0; font-size: 16px; font-weight: 400; line-height: 24px; }
svg { display: block; flex: none; }
.sprite { position: absolute; width: 0; height: 0; }
.ico { width: 16px; height: 16px; }
.caret { width: 10px; height: 6px; }
.box { width: 12px; height: 12px; flex: none; }

.app {
  height: 100vh;
  display: flex;
  flex-direction: column;
  border: 1px solid #000;
  background: #fff;
  overflow: hidden;
}

/* top bar */
.topbar {
  height: 60px;
  flex: none;
  display: flex;
  align-items: center;
  padding: 4px 9px 0;
  background: #1f496d;
}
.logo { display: flex; align-items: center; gap: 8px; width: 239px; flex: none; color: #fff; }
.logo svg { width: 38px; height: 44px; margin-top: -5px; }
.logo span { font: bold 31px/36px Roboto, "Liberation Sans", sans-serif; }
.btn {
  display: flex;
  align-items: center;
  flex: none;
  height: 32px;
  padding: 0 12px 0 7px;
  background: #f5f5f5;
  border: 1px solid #e1e1e1;
  color: #606060;
  font-size: 12px;
  white-space: nowrap;
}
.btn span { margin-left: 8px; }
.btn .caret { margin-left: 9px; color: #555; }
.toolbar .btn { padding-right: 11px; }
.toolbar .btn.plain { padding: 0 12px; }
.create { width: 109px; }
.group { display: flex; }
.sep { width: 1px; height: 14px; background: #ccc; margin: 0 8px 0 9px; flex: none; }
.btn.split { width: 28px; padding: 0; justify-content: center; border-left: 0; }
.btn.split .caret { margin: 0; }
.search { width: 218px; }
.fav { width: 28px; display: flex; align-items: center; justify-content: center; background: #5fa2dd; border: 1px solid #4b93d4; border-right: 1px solid #fff; }
.fav.drop { width: 29px; color: #fff; border-left: 0; border-right: 0; }
.field { display: flex; align-items: center; height: 32px; flex: 1; min-width: 0; background: #fff; border: 1px solid #cfcfcf; font-weight: 300; }
.field input { flex: 1; min-width: 0; border: 0; padding: 2px 10px 0; background: none; outline: 0; }
.field input::placeholder { color: #666; opacity: 1; }
.clear { width: 32px; height: 30px; display: flex; align-items: center; justify-content: center; color: #919191; }
.clear svg:not(.caret) { width: 12px; height: 12px; }
.msg { width: 99px; }
.right { display: flex; align-items: center; margin-left: auto; }
.combo { width: 180px; flex: none; }
.tasks { width: 75px; }
.alerts { position: relative; width: 77px; margin: 0 9px; }
.account { width: 114px; }
.badge {
  position: absolute;
  right: -13px;
  top: -11px;
  width: 25px;
  height: 21px;
  border: 2px solid #fff;
  border-radius: 10px;
  background: linear-gradient(#f99, #f03a34);
  color: #fff;
  font-size: 11px;
  line-height: 17px;
  font-weight: 400;
  z-index: 1;
}

/* frame */
.body { flex: 1; min-height: 0; display: flex; }
.bar { display: flex; align-items: center; height: 44px; flex: none; padding: 0 16px; background: #5fa2dd; color: #e7f1fa; }
.tools { display: flex; align-items: center; gap: 8px; margin-left: auto; color: #d4e6f7; }
.tools.wide { gap: 18px; }
.arrow-left { width: 6px; height: 10px; }
.t14 { width: 14px; height: 14px; }
.t16 { width: 16px; height: 16px; }
.help { width: 10px; height: 14px; }
.splitter { width: 10px; flex: none; display: flex; align-items: center; background: #f5f5f5; }
.splitter button { width: 10px; height: 48px; display: flex; align-items: center; justify-content: center; background: #dfdfdf; color: #8f8f8f; margin-top: 32px; }
.splitter svg { width: 6px; height: 10px; }
.scroll { width: 17px; flex: none; display: flex; flex-direction: column; align-items: center; background: #f0f0f0; padding-top: 7px; }
.scroll svg { width: 7px; height: 4px; transform: rotate(180deg); color: #999; }
.thumb { width: 13px; margin-top: 6px; background: #c1c1c1; }
.thumb.long { height: 75%; }
.thumb.short { height: 126px; }

/* navigation */
.nav { width: 262px; flex: none; display: flex; flex-direction: column; }
.navbar .brand { width: 14px; height: 16px; color: #1fbdf7; margin: 0 9px 0 1px; }
.navscroll { display: flex; flex: 1; min-height: 0; }
.tree { flex: 1; min-width: 0; overflow: hidden; font-size: 12px; font-weight: 700; color: #444; }
.tree li { display: flex; align-items: center; height: 32px; white-space: nowrap; }
.tree .ico { margin-right: 6px; }
.tri { width: 5px; height: 8px; margin-right: 11px; color: #3c4c5c; }
.tri.open { width: 8px; height: 5px; margin-right: 8px; }
.l1 { padding-left: 12px; }
.l2 { padding-left: 34px; }
.tree .leaf { padding-left: 50px; font-weight: 300; color: #333; }
.selected { background: #ffefbb; }

/* main */
.main { flex: 1; min-width: 0; display: flex; flex-direction: column; }
.tabs { padding: 8px 0 0 6px; gap: 4px; align-items: stretch; }
.tab { position: relative; display: flex; align-items: center; padding: 0 41px 0 14px; height: 36px; }
.tab.single { padding-right: 24px; }
.tab .ico { margin-right: 7px; }
.tab.active { background: #fff; color: #4a83b8; outline: 1px solid #5fa2dd; outline-offset: -3px; }
.marks { position: absolute; top: 2px; right: 3px; display: flex; gap: 2px; }
.mini { width: 11px; height: 11px; }
.shut { width: 10px; height: 10px; color: #fff; }
.active .shut { color: #919191; }
.toolbar { display: flex; align-items: center; height: 44px; flex: none; padding: 0 8px; gap: 8px; }
.toolbar .sep { margin: 0; }
.form { display: grid; grid-template-columns: 1fr 1fr; height: 104px; flex: none; margin: 5px 6px 16px; background: #f5f5f5; border-top: 1px solid #b5b5b5; font-weight: 300; }
.col { display: flex; flex-direction: column; gap: 10px; padding: 1px 18px 0 15px; }
.second { padding: 6px 19px 0 15px; }
.line { display: flex; align-items: center; height: 32px; }
label, .lbl { width: 115px; flex: none; }
.text { flex: 1; min-width: 0; height: 32px; border: 1px solid #cfcfcf; background: #fff; padding: 2px 10px 0; }
.req { width: 7px; height: 7px; margin: 0 0 12px 7px; }
.tick { position: relative; appearance: none; width: 15px; height: 14px; border: 2px solid #999; border-radius: 2px; }
.tick::after { content: ""; position: absolute; left: 1px; top: -3px; width: 14px; height: 12px; background: #888; clip-path: polygon(0 45%, 18% 30%, 38% 58%, 84% 0, 100% 14%, 40% 100%); }
.uid { margin-left: 18px; }
.pic { margin: 0 8px; }
.iconbtns { display: flex; }
.iconbtns button { width: 32px; height: 32px; display: flex; align-items: center; justify-content: center; background: #5fa2dd; border: 1px solid #5090cf; }
.pick { position: relative; flex: 1; min-width: 0; }
.pick select { appearance: none; width: 100%; height: 32px; padding: 2px 10px 0; border: 1px solid #cfcfcf; border-radius: 0; background: #fff; }
.pick .caret { position: absolute; right: 11px; top: 13px; color: #8a8a8a; }
.req + label { margin-left: 10px; }

/* lower panels */
.lower { flex: 1; min-height: 0; display: flex; }
.topic { width: 250px; flex: none; }
.divider { width: 10px; background: #ececec; flex: none; }
.topics li { display: flex; align-items: center; height: 32px; padding-left: 9px; font-weight: 300; }
.topics .ico { margin: 0 6px 0 7px; }
.auth { flex: 1; min-width: 0; display: flex; flex-direction: column; }
.auth .bar .ico { margin-right: 8px; }
.gridwrap { position: relative; flex: 1; min-height: 0; overflow: hidden; }
.grid { width: 100%; table-layout: fixed; border-collapse: separate; border-spacing: 0; }
.c-guest { width: 104px; }
.c-user { width: 70px; }
.c-power { width: 119px; }
.c-admin { width: 130px; }
.c-end { width: 11px; }
.grid th { height: 35px; padding: 0; border-top: 1px solid #cfcfcf; border-bottom: 2px solid #cfcfcf; border-left: 1px solid #cfcfcf; font-weight: 400; }
.grid th:first-child { text-align: left; padding-left: 10px; border-left: 0; }
.grid td { height: 32px; padding: 0; text-align: center; font-weight: 300; }
.grid td input { position: relative; display: block; appearance: none; width: 13px; height: 13px; margin: -6px auto 0; border: 1px solid #8e8f8f; background: linear-gradient(135deg, #b9bfc8, #f2f2f2) content-box #f4f4f4; padding: 2px; outline: 1px solid #c3c7cc; outline-offset: -3px; }
.grid td input:checked::after { content: ""; position: absolute; left: 2px; top: 1px; width: 8px; height: 9px; background: #3d5595; clip-path: polygon(0 48%, 22% 40%, 38% 66%, 72% 0, 100% 0, 50% 100%, 30% 100%); }
.shade td { background: #e9eef3; }
.cell { display: flex; align-items: center; white-space: nowrap; }
.cell span { margin-left: 6px; }
.cell .box + .ico { margin: 0 -1px 0 8px; }
.d0 { padding-left: 9px; }
.d1 { padding-left: 31px; }
.d2 { padding-left: 72px; }
.scroll.over { position: absolute; right: 0; top: 35px; bottom: 0; }

/* selection panel */
.selection { width: 45px; flex: none; display: flex; flex-direction: column; align-items: center; gap: 8px; padding-top: 19px; background: #5fa2dd; color: #e7f1fa; }
.selection span { writing-mode: vertical-rl; font-size: 16px; line-height: 20px; }
```
